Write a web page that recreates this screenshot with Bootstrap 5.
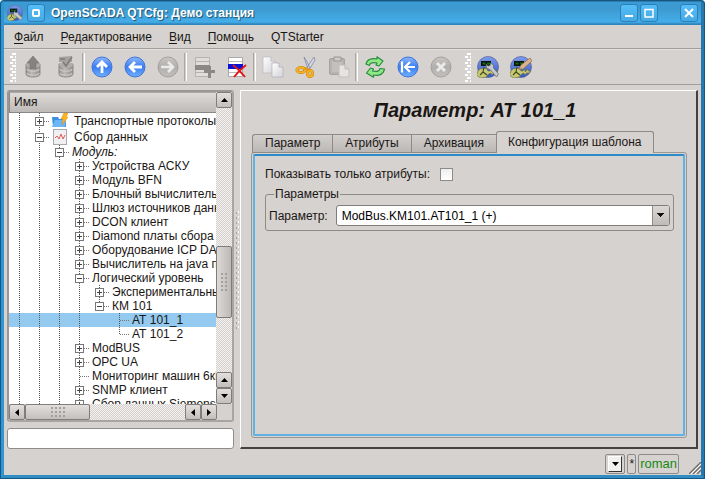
<!DOCTYPE html>
<html lang="ru">
<head>
<meta charset="utf-8">
<meta name="viewport" content="width=device-width, initial-scale=1">
<title>OpenSCADA QTCfg: Демо станция</title>
<link href="https://cdn.jsdelivr.net/npm/bootstrap@5.3.0/dist/css/bootstrap.min.css" rel="stylesheet">
<style>
:root { --face: #d6d2cf; --edge: #8d8a88; --ink: #1a1614; }
body { font: 12px/14px "Liberation Sans", Arial, sans-serif; color: var(--ink); background: #fff; }
button { color: inherit; }
.app-window { height: 100vh; min-height: 440px; background: var(--face); border: 4px solid #2f95d3; border-top: 0; border-right-color: #2679ac; border-bottom-color: #2f8cc5; border-radius: 4px 4px 0 0; outline: 1px solid #17567e; outline-offset: -1px; overflow: hidden; position: relative; }
.title-bar { height: 25px; margin: 0 -4px; padding: 1px 7px 0 7px; background: linear-gradient(#1d5e86 0 1px, #3a9bd6 2px, #3d99ce 8px, #44aeea 22px, #2f86ba 24px); }
.title-text { font-size: 12px; font-weight: 700; line-height: 16px; color: #fff; text-shadow: 1px 1px 1px #1c4f70; padding-left: 2px; }
.win-btn { width: 18px; height: 18px; padding: 0; border: 1px solid #2a82b8; border-radius: 3px; background: linear-gradient(#56bdf8, #45a9e4); display: flex; }
.win-btn svg { margin: auto; }
.win-size { margin: 0 22px 0 2px; }
.menu-bar { height: 24px; padding: 0 2px; gap: 1px; border-bottom: 1px solid #a19d9b; }
.menu-bar a { color: var(--ink); text-decoration: none; padding: 5px 8px; }
.menu-bar u { text-underline-offset: 2px; }
.tool-bar { height: 36px; padding: 0 6px; border-top: 1px solid #e4e1df; border-bottom: 1px solid #a19d9b; }
.tool-btn { width: 33px; height: 32px; padding: 0; border: 0; background: none; display: flex; align-items: center; justify-content: center; }
.tool-sep { width: 3px; height: 28px; border-left: 1px solid #aaa6a3; border-right: 1px solid #fff; }
.work { padding: 5px 3px 0 3px; min-height: 0; }
.side { width: 227px; }
.tree-frame { border: 2px solid #a8a5a3; border-color: #9a9795 #a8a5a3 #a8a5a3 #9a9795; border-radius: 3px; background: #fff; min-height: 0; }
.tree-main { min-height: 0; }
.tree-head { height: 21px; padding: 0 4px; background: linear-gradient(#dddad8, #bdbab8); border: 1px solid #8a8785; border-top-color: #aaa; border-right: 0; line-height: 19px; }
.tree-body { min-height: 0; overflow: hidden; }
.tree-body ul { margin: 0; padding: 0; list-style: none; }
.node { height: 14px; display: flex; white-space: nowrap; }
.node.tall { height: 16px; line-height: 16px; }
.node.sel { background: #94caef; }
.node i { flex: none; width: 20px; position: relative; }
.node i.v, .node i.n, .node i.e { background: repeating-linear-gradient(#555 0 1px, transparent 1px 2px) 10px 0 / 1px 100% no-repeat; }
.node i.e { background-size: 1px 50%; }
.node i.n::after, .node i.e::after { content: ""; position: absolute; left: 11px; right: 0; top: 50%; height: 1px; background: repeating-linear-gradient(90deg, #777 0 1px, transparent 1px 2px); }
.fold { position: absolute; z-index: 1; left: 6px; top: calc(50% - 4px); width: 9px; height: 9px; padding: 0; border: 1px solid #777; background: linear-gradient(#444, #444) center / 5px 1px no-repeat #fff; display: block; }
.fold.plus { background: linear-gradient(#444, #444) center / 5px 1px no-repeat, linear-gradient(#444, #444) center / 1px 5px no-repeat #fff; }
.node span { padding-left: 3px; }
.node svg { flex: none; margin-left: 3px; margin-right: 3px; }
.bar-v { width: 16px; }
.bar-h { height: 16px; padding-right: 15px; background: var(--face); }
.trough { background: repeating-conic-gradient(#d2cfcd 0 25%, #f4f3f2 0 50%) 0 0 / 2px 2px; }
.room-above { flex: 139 0 0; }
.room-below { flex: 54 0 0; }
.sb-btn, .sb-thumb { flex: none; width: 16px; height: 16px; padding: 0; border: 1px solid #7f7c7a; border-radius: 2px; background: linear-gradient(#e2dfdd, #c2bfbc); display: flex; align-items: center; justify-content: center; }
.bar-v .sb-thumb { height: 72px; background: linear-gradient(90deg, #dcd9d7, #bcb9b7); }
.bar-h .sb-thumb { width: 65px; }
.grip { width: 18px; height: 10px; background: conic-gradient(from 90deg at 2px 2px, transparent 0 270deg, #a29f9d 0) 0 0 / 4px 4px; }
.bar-v .grip { width: 10px; height: 18px; }
.tool-dots { width: 6px; height: 29px; background: conic-gradient(from 90deg at 2px 2px, transparent 0 270deg, #fff 0) 0 0 / 8px 6px, conic-gradient(from 90deg at 2px 2px, transparent 0 270deg, #fff 0) 3px 3px / 8px 6px; }
.split { width: 6px; }
.split-dots { width: 3px; height: 118px; background: conic-gradient(from 90deg at 2px 2px, transparent 0 270deg, #fff 0) 0 0 / 5px 5px, conic-gradient(from 90deg at 2px 2px, transparent 0 270deg, #a5a19f 0) 1px 1px / 5px 5px; }
.filter { height: 21px; margin-top: 6px; border: 1px solid #8f8c8a; border-radius: 3px; background: #fff; padding: 0 4px; width: 100%; outline-color: #58b3e6; }
.page { border: 1px solid #fff; border-right: 2px solid #45413f; border-bottom: 2px solid #45413f; min-width: 0; padding: 6px 9px 9px 10px; }
.page h1 { font: italic 700 20px/26px "Liberation Sans", Arial, sans-serif; margin: 0 0 8px; padding-left: 12px; text-align: center; }
.tabs { padding: 0 1px; align-items: flex-end; margin-bottom: -1px; position: relative; }
.tabs button { height: 19px; padding: 0 12px; border: 1px solid var(--edge); border-right: 0; background: linear-gradient(#d2cfcc, #bab7b4); line-height: 17px; white-space: nowrap; }
.tabs button:first-child { border-radius: 3px 0 0 0; }
.tabs button.active { height: 22px; padding: 0 11px 1px; border: 1px solid var(--edge); border-bottom: 0; border-radius: 3px 3px 0 0; background: var(--face); }
.pane { border: 1px solid #999694; border-radius: 3px; padding: 1px; }
.pane-in { border: 2px solid #5fb2e4; border-top-color: #2c8bc8; border-radius: 2px; padding: 11px 9px 0 10px; height: 100%; }
.tick { appearance: none; width: 13px; height: 13px; border: 1px solid #8d8a88; background: linear-gradient(#eee, #fff); margin: 0 0 0 10px; }
.tick:checked { background: #3f9bd2; }
.group { border: 1px solid var(--edge); border-radius: 3px; margin: 6px 0 0; padding: 0 3px 4px 3px; min-width: 0; }
.group legend { float: none; width: auto; font-size: 12px; line-height: 14px; margin: 0 0 4px 5px; padding: 0 1px; }
.combo { height: 21px; border: 1px solid #7f7c7a; border-radius: 3px; font-size: 12px; line-height: 14px; padding: 0 20px 0 5px; color: #000; appearance: none; background: #fff; }
.combo-box { position: relative; min-width: 0; }
.combo-box::after { content: ""; position: absolute; right: 1px; top: 1px; bottom: 1px; width: 17px; border-left: 1px solid #8d8a88; border-radius: 0 2px 2px 0; background: linear-gradient(#111,#111) 4px 7px / 7px 1px no-repeat, linear-gradient(#111,#111) 5px 8px / 5px 1px no-repeat, linear-gradient(#111,#111) 6px 9px / 3px 1px no-repeat, linear-gradient(#111,#111) 7px 10px / 1px 1px no-repeat, linear-gradient(#dad7d5, #bebbb8); pointer-events: none; }
.status { height: 26px; padding: 5px 0 1px; gap: 2px; }
.cell { height: 20px; border: 1px solid #8d8a88; border-radius: 2px; padding: 0 1px; display: flex; align-items: center; }
.cell-style { padding: 0 2px; }
.drop { width: 14px; height: 16px; padding: 0; border: 1px solid #fff; border-right-color: #333; border-bottom-color: #333; background: #f2f1f0; display: flex; align-items: center; justify-content: center; }
.user { color: #148a14; font-size: 13px; }
.corner { align-self: flex-end; margin-left: 8px; }
</style>
<script src="https://cdn.jsdelivr.net/npm/bootstrap@5.3.0/dist/js/bootstrap.bundle.min.js"></script>
</head>
<body>
<svg width="0" height="0" class="position-absolute" aria-hidden="true">
  <defs>
    <linearGradient id="blue" x2="0" y2="1"><stop stop-color="#8db9fb"/><stop offset=".5" stop-color="#3b7cf0"/><stop offset="1" stop-color="#6fb2ff"/></linearGradient>
    <linearGradient id="grey" x2="0" y2="1"><stop stop-color="#c9c7c5"/><stop offset=".5" stop-color="#b1afad"/><stop offset="1" stop-color="#c2c0be"/></linearGradient>
    <linearGradient id="paper" x2="1" y2="1"><stop stop-color="#fff"/><stop offset="1" stop-color="#d3d3d8"/></linearGradient>
    <linearGradient id="globe" x2="0" y2="1"><stop stop-color="#7f9cec"/><stop offset="1" stop-color="#3355c4"/></linearGradient>
    <linearGradient id="drum"><stop stop-color="#8e8b89"/><stop offset=".4" stop-color="#bdbab8"/><stop offset="1" stop-color="#8e8b89"/></linearGradient>
    <symbol id="scada" viewBox="0 0 22 22">
      <circle cx="11" cy="11" r="10.5" fill="url(#globe)" stroke="#5d6a99" stroke-width=".8"/>
      <path d="M4 5h10v5H4z" fill="#0c130b"/><path d="M5.500 6.500h3v2h-3zM10 6.500h3v2h-3z" fill="#0b6c14"/>
      <path d="M1 15l2-2 4-1 3 1 1 2 2 0 1-2 1.500 3 1.500-3 1.500 2h2l-1 2h-3l-1 2-2-2-3 2-1 2-6 1-4-3z" fill="#c6ca74" stroke="#6a6e3a" stroke-width=".7"/>
      <path d="M7 11l-1 5 4 3M6 16l-3 3" fill="none" stroke="#42451f" stroke-width="1.100"/>
    </symbol>
    <symbol id="db" viewBox="0 0 22 22">
      <path d="M4 8v10c0 4 14 4 14 0V8z" fill="url(#drum)" stroke="#8e8b89"/><ellipse cx="11" cy="9" rx="7" ry="3" fill="#b0adab"/>
      <path d="M5 13c1 3 11 3 12 0M5 17c1 3 11 3 12 0" fill="none" stroke="#cbc8c6" stroke-width="1.200"/>
    </symbol>
  </defs>
</svg>
<div class="app-window d-flex flex-column">
  <header class="title-bar d-flex align-items-center flex-shrink-0">
    <svg width="16" height="16" viewBox="0 0 22 22" class="me-1"><use href="#scada" width="22" height="22"/><path d="M10 8l2 3 3-1 1 3 5 5-2 3-7-6-3 0z" fill="#c6c9cd" stroke="#666" stroke-width=".7"/></svg>
    <button class="win-btn me-1" aria-label="Меню окна"><svg width="10" height="10"><rect x="2" y="2" width="6" height="6" rx="1" fill="none" stroke="#fff" stroke-width="2"/></svg></button>
    <span class="title-text flex-grow-1">OpenSCADA QTCfg: Демо станция</span>
    <div class="d-flex">
      <button class="win-btn" aria-label="Свернуть"><svg width="10" height="10"><path d="M1 8h8" stroke="#fff" stroke-width="2"/></svg></button>
      <button class="win-btn win-size" aria-label="Развернуть"><svg width="10" height="10"><path d="M1 1.500h8V9H1z" fill="none" stroke="#fff" stroke-width="1.500"/></svg></button>
      <button class="win-btn" aria-label="Закрыть"><svg width="10" height="10"><path d="M1 1l8 8M9 1l-8 8" stroke="#fff" stroke-width="2"/></svg></button>
    </div>
  </header>
  <nav class="menu-bar d-flex align-items-center flex-shrink-0">
    <a href="#"><u>Ф</u>айл</a><a href="#"><u>Р</u>едактирование</a><a href="#"><u>В</u>ид</a><a href="#"><u>П</u>омощь</a><a href="#">QTStarter</a>
  </nav>
  <div class="tool-bar d-flex align-items-center flex-shrink-0" role="toolbar">
    <div class="tool-dots"></div>
    <button class="tool-btn" aria-label="Загрузить" disabled><svg width="22" height="22"><use href="#db" width="22" height="22"/><path d="M11 0l6 7h-3v6H8V7H5z" fill="#858280" stroke="#777472" stroke-width=".6"/></svg></button>
    <button class="tool-btn" aria-label="Сохранить" disabled><svg width="22" height="22"><use href="#db" width="22" height="22"/><path d="M4 1l13-1v6h-2l-4 6-4-6H4z" fill="#a5a29f"/><path d="M5 3h5M8 6l3 4 6-9" fill="none" stroke="#7f7c7a" stroke-width="1.500"/></svg></button>
    <div class="tool-sep"></div>
    <button class="tool-btn" aria-label="Вверх"><svg width="22" height="22"><circle cx="11" cy="11" r="10" fill="url(#blue)" stroke="#3f74d6"/><path d="M11 17V6M6 11l5-5 5 5" fill="none" stroke="#fff" stroke-width="2.800"/></svg></button>
    <button class="tool-btn" aria-label="Назад"><svg width="22" height="22"><circle cx="11" cy="11" r="10" fill="url(#blue)" stroke="#3f74d6"/><path d="M18 11H6M11 6l-5 5 5 5" fill="none" stroke="#fff" stroke-width="2.800"/></svg></button>
    <button class="tool-btn" aria-label="Вперёд" disabled><svg width="22" height="22"><circle cx="11" cy="11" r="10" fill="url(#grey)" stroke="#a3a09e"/><path d="M4 11h12M11 6l5 5-5 5" fill="none" stroke="#eceae9" stroke-width="2.600"/></svg></button>
    <div class="tool-sep"></div>
    <button class="tool-btn" aria-label="Добавить" disabled><svg width="22" height="22"><path d="M2.500 1.500h14v19h-14z" fill="#e0dddb" stroke="#b5b2b0"/><path d="M3 5.500h13M3 16.500h13" stroke="#b5b2b0"/><path d="M2 9h15v5H2z" fill="#8b8886"/><path d="M16.500 10v12M11 15.500h11" stroke="#8b8886" stroke-width="3"/></svg></button>
    <button class="tool-btn" aria-label="Удалить"><svg width="22" height="22"><path d="M2.500 1.500h14v19h-14z" fill="#fff" stroke="#aaa"/><path d="M3 5.500h13M3 16.500h13" stroke="#bbb"/><path d="M2 8h15v5H2z" fill="#0810d8"/><path d="M7 9c4 3 8 7 12 12M20 9c-4 3-8 7-12 12" fill="none" stroke="#e21818" stroke-width="2"/></svg></button>
    <div class="tool-sep"></div>
    <button class="tool-btn" aria-label="Копировать"><svg width="22" height="22"><path d="M1 1h8l4 4v12H1z" fill="url(#paper)" stroke="#b9b9bd" stroke-width=".7"/><path d="M9 1v4h4" fill="#ddd" stroke="#b0b0b5" stroke-width=".7"/><path d="M10 7h7l4 4v10H10z" fill="url(#paper)" stroke="#b0b0b5" stroke-width=".7"/><path d="M17 7v4h4" fill="#ddd" stroke="#a5a5aa" stroke-width=".7"/></svg></button>
    <button class="tool-btn" aria-label="Вырезать"><svg width="22" height="22"><path d="M9 1l4 12 2-1L11 4zM19 1l1 3-6 10-3-1z" fill="#d6d9ea" stroke="#8287a4" stroke-width=".8"/><ellipse cx="6" cy="14" rx="4" ry="2.500" fill="none" stroke="#c98208" stroke-width="3.200"/><ellipse cx="6" cy="14" rx="4" ry="2.500" fill="none" stroke="#f7b126" stroke-width="2"/><ellipse cx="15" cy="17.500" rx="2.500" ry="3" fill="none" stroke="#c98208" stroke-width="3.200"/><ellipse cx="15" cy="17.500" rx="2.500" ry="3" fill="none" stroke="#f7b126" stroke-width="2"/><path d="M9 12l5 2" stroke="#e39a14" stroke-width="2.500"/></svg></button>
    <button class="tool-btn" aria-label="Вставить" disabled><svg width="22" height="22"><rect x="1.500" y="2.500" width="15" height="16" rx="1.500" fill="#b6b3b1" stroke="#a5a2a0"/><path d="M4 5h10v11H4z" fill="#c2bfbd"/><path d="M6 1h7v4H6z" fill="#cfcdcb" stroke="#989593"/><path d="M11 9h6l4 4v8H11z" fill="#e6e4e2" stroke="#c0bdbb"/><path d="M17 9v4h4" fill="#d2d0ce" stroke="#bebbb9"/></svg></button>
    <div class="tool-sep"></div>
    <button class="tool-btn" aria-label="Обновить"><svg width="22" height="22"><path d="M2 8c1-5 6-6 11-5V.800L19 5l-4 5-3-1 1-2C8 6 6 7 5.500 9.500z" fill="#8ee886" stroke="#2b8a3d" stroke-width="1.200" stroke-linejoin="round"/><path d="M20.500 13c-1 6-6 7-11 6v2.200L2.500 17l4-5 3 1-1 2c5 1 7 0 7.500-2.500z" fill="#8ee886" stroke="#2b8a3d" stroke-width="1.200" stroke-linejoin="round"/></svg></button>
    <button class="tool-btn" aria-label="Запустить"><svg width="22" height="22"><circle cx="11" cy="11" r="10" fill="url(#blue)" stroke="#3f74d6"/><path d="M18 11H8M13 6l-5 5 5 5M5 5.500v11" fill="none" stroke="#fff" stroke-width="2.200"/></svg></button>
    <button class="tool-btn" aria-label="Остановить" disabled><svg width="22" height="22"><circle cx="11" cy="11" r="10" fill="url(#grey)" stroke="#a3a09e"/><path d="M7 7l8 8M15 7l-8 8" stroke="#eceae9" stroke-width="3"/></svg></button>
    <div class="tool-dots ms-2"></div>
    <button class="tool-btn" aria-label="Конфигуратор"><svg width="22" height="22"><use href="#scada" width="22" height="22"/><path d="M9 8l2 2 2-.5.500-2.500 3 2v3l5 6-2 3-6-7-4-2z" fill="#c6c9cd" stroke="#5f6166" stroke-width=".7"/></svg></button>
    <button class="tool-btn" aria-label="Визуализатор"><svg width="22" height="22"><use href="#scada" width="22" height="22"/><path d="M9 13l2-4L20 2l2 3-9 8z" fill="#dcb48a" stroke="#8a6a4a" stroke-width=".7"/></svg></button>
  </div>
  <main class="work d-flex flex-grow-1">
    <aside class="side d-flex flex-column flex-shrink-0">
      <div class="tree-frame d-flex flex-column flex-grow-1">
        <div class="tree-main d-flex flex-grow-1">
          <div class="d-flex flex-column flex-grow-1 overflow-hidden">
            <div class="tree-head flex-shrink-0">Имя</div>
            <div class="tree-body flex-grow-1">
              <ul role="tree">
                <li class="node tall"><i class="v"></i><i class="n"><button class="fold plus" aria-label="Развернуть"></button></i><svg width="16" height="16"><path d="M0 4h6l1 2h7v8H1z" fill="#3f8fe0"/><path d="M0 14L3 7h11l-1 7z" fill="#6db6f5"/><path d="M12 0h4l-2 4h2l-6 8 1-6H9z" fill="#ffb41e" stroke="#d98a10" stroke-width=".5"/></svg><span>Транспортные протоколы</span></li>
                <li class="node tall"><i class="v"></i><i class="n"><button class="fold" aria-label="Свернуть"></button></i><svg width="16" height="16"><rect x="1.500" y=".5" width="13" height="15" fill="#f0f0f3" stroke="#a9a9ad"/><path d="M3 9l2-2 2 3 2-5 2 5 2-4" fill="none" stroke="#e05a5a"/></svg><span>Сбор данных</span></li>
                <li class="node fst-italic"><i class="v"></i><i class="v"></i><i class="n"><button class="fold" aria-label="Свернуть"></button></i><span>Модуль:</span></li>
                <li class="node"><i class="v"></i><i class="v"></i><i class="v"></i><i class="n"><button class="fold plus" aria-label="Развернуть"></button></i><span>Устройства АСКУ</span></li>
                <li class="node"><i class="v"></i><i class="v"></i><i class="v"></i><i class="n"><button class="fold plus" aria-label="Развернуть"></button></i><span>Модуль BFN</span></li>
                <li class="node"><i class="v"></i><i class="v"></i><i class="v"></i><i class="n"><button class="fold plus" aria-label="Развернуть"></button></i><span>Блочный вычислитель</span></li>
                <li class="node"><i class="v"></i><i class="v"></i><i class="v"></i><i class="n"><button class="fold plus" aria-label="Развернуть"></button></i><span>Шлюз источников данных</span></li>
                <li class="node"><i class="v"></i><i class="v"></i><i class="v"></i><i class="n"><button class="fold plus" aria-label="Развернуть"></button></i><span>DCON клиент</span></li>
                <li class="node"><i class="v"></i><i class="v"></i><i class="v"></i><i class="n"><button class="fold plus" aria-label="Развернуть"></button></i><span>Diamond платы сбора</span></li>
                <li class="node"><i class="v"></i><i class="v"></i><i class="v"></i><i class="n"><button class="fold plus" aria-label="Развернуть"></button></i><span>Оборудование ICP DAS</span></li>
                <li class="node"><i class="v"></i><i class="v"></i><i class="v"></i><i class="n"><button class="fold plus" aria-label="Развернуть"></button></i><span>Вычислитель на java подобном</span></li>
                <li class="node"><i class="v"></i><i class="v"></i><i class="v"></i><i class="n"><button class="fold" aria-label="Свернуть"></button></i><span>Логический уровень</span></li>
                <li class="node"><i class="v"></i><i class="v"></i><i class="v"></i><i class="v"></i><i class="n"><button class="fold plus" aria-label="Развернуть"></button></i><span>Экспериментальный</span></li>
                <li class="node"><i class="v"></i><i class="v"></i><i class="v"></i><i class="v"></i><i class="e"><button class="fold" aria-label="Свернуть"></button></i><span>КМ 101</span></li>
                <li class="node sel" aria-selected="true"><i class="v"></i><i class="v"></i><i class="v"></i><i class="v"></i><i></i><i class="n"></i><span>АТ 101_1</span></li>
                <li class="node"><i class="v"></i><i class="v"></i><i class="v"></i><i class="v"></i><i></i><i class="e"></i><span>АТ 101_2</span></li>
                <li class="node"><i class="v"></i><i class="v"></i><i class="v"></i><i class="n"><button class="fold plus" aria-label="Развернуть"></button></i><span>ModBUS</span></li>
                <li class="node"><i class="v"></i><i class="v"></i><i class="v"></i><i class="n"><button class="fold plus" aria-label="Развернуть"></button></i><span>OPC UA</span></li>
                <li class="node"><i class="v"></i><i class="v"></i><i class="v"></i><i class="n"></i><span>Мониторинг машин 6кВ</span></li>
                <li class="node"><i class="v"></i><i class="v"></i><i class="v"></i><i class="n"><button class="fold plus" aria-label="Развернуть"></button></i><span>SNMP клиент</span></li>
                <li class="node"><i class="v"></i><i class="v"></i><i class="v"></i><i class="n"><button class="fold plus" aria-label="Развернуть"></button></i><span>Сбор данных Siemens</span></li>
              </ul>
            </div>
          </div>
          <div class="bar-v trough d-flex flex-column flex-shrink-0">
            <button class="sb-btn" aria-label="Вверх"><svg width="7" height="4"><path d="M0 4l3.500-4L7 4z"/></svg></button>
            <div class="room-above"></div>
            <div class="sb-thumb"><span class="grip"></span></div>
            <div class="room-below"></div>
            <button class="sb-btn" aria-label="Вверх"><svg width="7" height="4"><path d="M0 4l3.500-4L7 4z"/></svg></button>
            <button class="sb-btn" aria-label="Вниз"><svg width="7" height="4"><path d="M0 0l3.500 4L7 0z"/></svg></button>
          </div>
        </div>
        <div class="bar-h d-flex flex-shrink-0">
          <button class="sb-btn" aria-label="Влево"><svg width="4" height="7"><path d="M4 0L0 3.500 4 7z"/></svg></button>
          <div class="sb-thumb"><span class="grip"></span></div>
          <div class="trough flex-grow-1"></div>
          <button class="sb-btn" aria-label="Влево"><svg width="4" height="7"><path d="M4 0L0 3.500 4 7z"/></svg></button>
          <button class="sb-btn" aria-label="Вправо"><svg width="4" height="7"><path d="M0 0l4 3.500L0 7z"/></svg></button>
        </div>
      </div>
      <input class="filter flex-shrink-0" type="text" aria-label="Поиск">
    </aside>
    <div class="split d-flex align-items-center justify-content-center flex-shrink-0"><div class="split-dots"></div></div>
    <section class="page d-flex flex-column flex-grow-1">
      <h1>Параметр: АТ 101_1</h1>
      <div class="tabs d-flex" role="tablist">
        <button role="tab">Параметр</button><button role="tab">Атрибуты</button><button role="tab">Архивация</button><button class="active" role="tab" aria-selected="true">Конфигурация шаблона</button>
      </div>
      <div class="pane flex-grow-1" role="tabpanel">
        <div class="pane-in">
          <div class="d-flex align-items-center"><label for="only">Показывать только атрибуты:</label><input class="tick" id="only" type="checkbox"></div>
          <fieldset class="group">
            <legend>Параметры</legend>
            <div class="d-flex align-items-center">
              <label for="param" class="me-2">Параметр:</label>
              <div class="combo-box flex-grow-1"><select class="combo w-100 d-block" id="param"><option>ModBus.KM101.AT101_1 (+)</option></select></div>
            </div>
          </fieldset>
        </div>
      </div>
    </section>
  </main>
  <footer class="status d-flex justify-content-end flex-shrink-0">
    <div class="cell cell-style"><button class="drop" aria-label="Стиль"><svg width="7" height="4"><path d="M0 0l3.500 4L7 0z"/></svg></button></div>
    <div class="cell">*</div>
    <div class="cell user">roman</div>
    <svg class="corner" width="12" height="12"><path d="M0 12L12 0M4 12l8-8M8 12l4-4" stroke="#6d6a68" stroke-width="1.300"/><path d="M2 12L12 2M6 12l6-6" stroke="#fff"/></svg>
  </footer>
</div>
</body>
</html>
